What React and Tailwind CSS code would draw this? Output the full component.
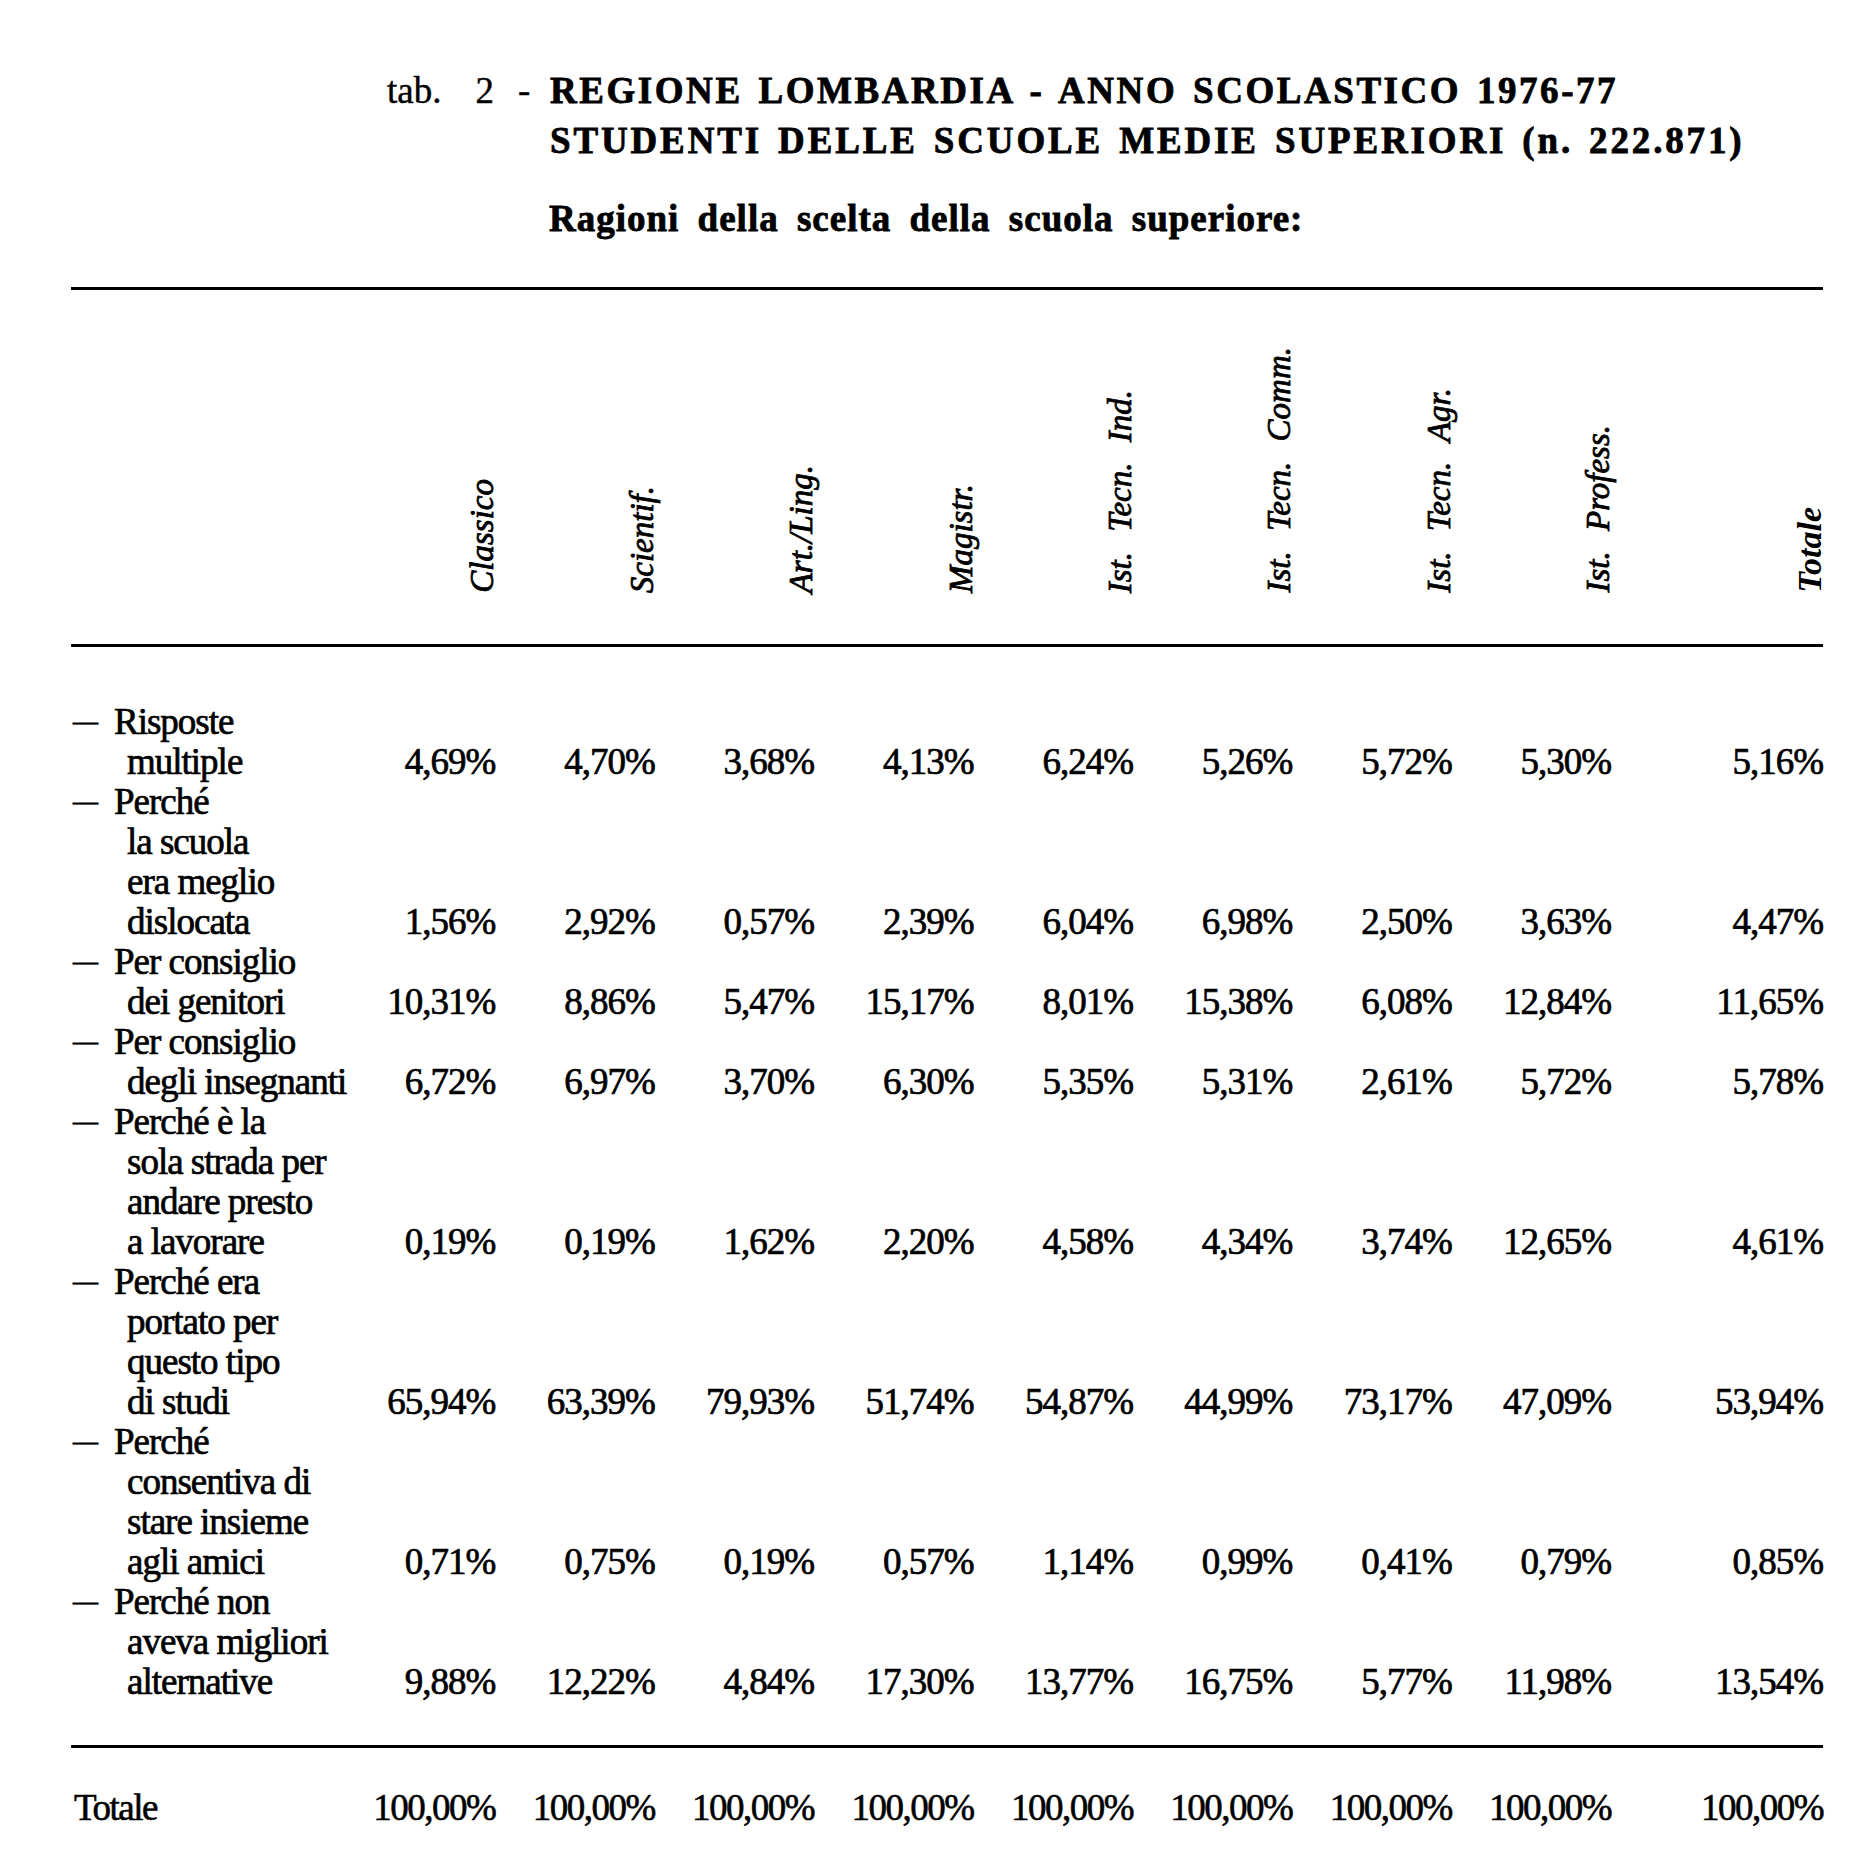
import React from "react";

const cols = [
  { label: "Classico" },
  { label: "Scientif." },
  { label: "Art./Ling." },
  { label: "Magistr." },
  { label: "Ist. Tecn. Ind." },
  { label: "Ist. Tecn. Comm." },
  { label: "Ist. Tecn. Agr." },
  { label: "Ist. Profess." },
  { label: "Totale", bold: true },
];

const rows = [
  { lines: ["Risposte", "multiple"], v: ["4,69%", "4,70%", "3,68%", "4,13%", "6,24%", "5,26%", "5,72%", "5,30%", "5,16%"] },
  { lines: ["Perché", "la scuola", "era meglio", "dislocata"], v: ["1,56%", "2,92%", "0,57%", "2,39%", "6,04%", "6,98%", "2,50%", "3,63%", "4,47%"] },
  { lines: ["Per consiglio", "dei genitori"], v: ["10,31%", "8,86%", "5,47%", "15,17%", "8,01%", "15,38%", "6,08%", "12,84%", "11,65%"] },
  { lines: ["Per consiglio", "degli insegnanti"], v: ["6,72%", "6,97%", "3,70%", "6,30%", "5,35%", "5,31%", "2,61%", "5,72%", "5,78%"] },
  { lines: ["Perché è la", "sola strada per", "andare presto", "a lavorare"], v: ["0,19%", "0,19%", "1,62%", "2,20%", "4,58%", "4,34%", "3,74%", "12,65%", "4,61%"] },
  { lines: ["Perché era", "portato per", "questo tipo", "di studi"], v: ["65,94%", "63,39%", "79,93%", "51,74%", "54,87%", "44,99%", "73,17%", "47,09%", "53,94%"] },
  { lines: ["Perché", "consentiva di", "stare insieme", "agli amici"], v: ["0,71%", "0,75%", "0,19%", "0,57%", "1,14%", "0,99%", "0,41%", "0,79%", "0,85%"] },
  { lines: ["Perché non", "aveva migliori", "alternative"], v: ["9,88%", "12,22%", "4,84%", "17,30%", "13,77%", "16,75%", "5,77%", "11,98%", "13,54%"] },
];

const grid = "grid grid-cols-[265px_repeat(8,159.4px)_1fr]";

export default function App() {
  return (
    <div className="w-[1852px] h-[1860px] bg-white text-black font-['Liberation_Serif',serif] overflow-hidden">
      {/* Title */}
      <div className="pt-[66px] pl-[387px]">
        <div className="grid grid-cols-[163px_auto] text-[37px] leading-[50px] whitespace-nowrap">
          <div className="flex [-webkit-text-stroke:0.4px_black]">
            <span>tab.</span>
            <span className="ml-[34px]">2</span>
            <span className="ml-[24px]">-</span>
          </div>
          <div className="font-bold tracking-[2.55px] [word-spacing:4px] [-webkit-text-stroke:0.8px_black]">REGIONE LOMBARDIA - ANNO SCOLASTICO 1976-77</div>
          <div></div>
          <div className="font-bold tracking-[2.85px] [word-spacing:4px] [-webkit-text-stroke:0.8px_black]">STUDENTI DELLE SCUOLE MEDIE SUPERIORI (n. 222.871)</div>
        </div>
        <div className="mt-[28px] pl-[162px] text-[37px] leading-[50px] font-bold tracking-[1px] [word-spacing:8px] whitespace-nowrap [-webkit-text-stroke:0.8px_black]">
          Ragioni della scelta della scuola superiore:
        </div>
      </div>

      {/* Table */}
      <div className="ml-[71px] w-[1752px] mt-[43px]">
        <div className="border-t-[3px] border-black"></div>

        {/* Header */}
        <div className={`${grid} h-[354px] pb-[51px]`}>
          <div></div>
          {cols.map((c) => (
            <div key={c.label} className="flex items-end justify-end">
              <div
                className={`[writing-mode:vertical-rl] rotate-180 whitespace-nowrap italic leading-[26px] [word-spacing:12px] ${
                  c.bold ? "font-bold text-[34px]" : "text-[33px] [-webkit-text-stroke:0.8px_black]"
                }`}
              >
                {c.label}
              </div>
            </div>
          ))}
        </div>

        <div className="border-t-[3px] border-black"></div>

        {/* Body */}
        <div className="pt-[55px] text-[37px] leading-[40px] tracking-[-1px] [-webkit-text-stroke:0.7px_black]">
          {rows.map((r, i) => (
            <div key={i} className={`${grid} items-end`}>
              <div className="flex whitespace-nowrap">
                <div className="w-[43px] shrink-0 pl-[2px] text-[25px]">—</div>
                <div>
                  {r.lines.map((l, j) => (
                    <div key={j} className={j > 0 ? "pl-[13px]" : ""}>
                      {l}
                    </div>
                  ))}
                </div>
              </div>
              {r.v.map((v, k) => (
                <div key={k} className="text-right">
                  {v}
                </div>
              ))}
            </div>
          ))}
        </div>

        <div className="mt-[43px] border-t-[3px] border-black"></div>

        {/* Totale */}
        <div className={`${grid} mt-[40px] text-[37px] leading-[40px] tracking-[-1.5px] [-webkit-text-stroke:0.6px_black]`}>
          <div className="pl-[3px]">Totale</div>
          {cols.map((c) => (
            <div key={c.label} className="text-right">100,00%</div>
          ))}
        </div>
      </div>
    </div>
  );
}
